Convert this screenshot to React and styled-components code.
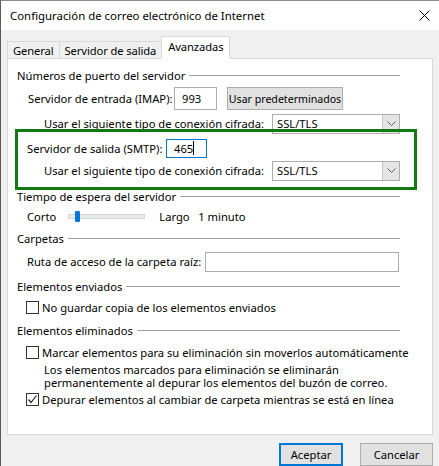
import styled, { createGlobalStyle } from 'styled-components';

const GlobalStyle = createGlobalStyle`
	html, body {
		margin: 0;
		padding: 0;
		background: #f0f0f0;
	}
	body {
		font-family: 'Noto Sans', 'Open Sans', sans-serif;
		font-size: 11.2px;
		color: #000;
	}
`;

const Window = styled.div`
	width: 438px;
	height: 465px;
	background: #f0f0f0;
	border-left: 1px solid #5a5a5a;
	border-top: 1px solid #8a8a8a;
	display: flex;
	flex-direction: column;
	overflow: hidden;
`;

const TitleBar = styled.div`
	height: 29px;
	background: #fff;
	display: flex;
	align-items: center;
	justify-content: space-between;
	padding: 0 7px 0 9px;
	flex-shrink: 0;
`;

const Title = styled.div`
	font-size: 11.4px;
	line-height: 29px;
`;

const Close = styled.svg`
	width: 11px;
	height: 11px;
	margin-right: 2px;
`;

const TabRow = styled.div`
	display: flex;
	align-items: flex-end;
	height: 28px;
	padding: 0 0 0 6px;
	position: relative;
	z-index: 1;
`;

const Tab = styled.div`
	height: ${(p) => (p.$active ? '21px' : '16px')};
	line-height: ${(p) => (p.$active ? '19px' : '17px')};
	padding: 0 ${(p) => (p.$active ? '6px' : '5px')};
	background: ${(p) => (p.$active ? '#fff' : '#f0f0f0')};
	border: 1px solid #d9d9d9;
	border-bottom: ${(p) => (p.$active ? '1px solid #fff' : '0')};
	margin-left: -1px;
	margin-bottom: ${(p) => (p.$active ? '-1px' : '0')};
	white-space: nowrap;
	letter-spacing: -0.1px;
	&:first-child {
		margin-left: 0;
	}
`;

const Panel = styled.div`
	margin: 0 6px 0 6px;
	height: 370px;
	background: #fff;
	border: 1px solid #d9d9d9;
	padding: 7px 32px 0 9px;
	display: flex;
	flex-direction: column;
	position: relative;
`;

const Section = styled.div`
	display: flex;
	align-items: center;
	height: 20px;
	margin-top: ${(p) => p.$mt || 0}px;
	white-space: nowrap;
	&::after {
		content: '';
		flex: 1;
		height: 1px;
		background: #a0a0a0;
		margin-left: 4px;
	}
`;

const Row = styled.div`
	display: flex;
	align-items: center;
	height: ${(p) => p.$h || 20}px;
	margin-top: ${(p) => p.$mt || 0}px;
	padding-left: ${(p) => p.$indent || 10}px;
	white-space: nowrap;
`;

const Label = styled.span`
	width: ${(p) => (p.$w ? `${p.$w}px` : 'auto')};
	flex-shrink: 0;
`;

const TextBox = styled.div`
	box-sizing: border-box;
	width: ${(p) => p.$w}px;
	height: ${(p) => p.$h || 22}px;
	border: 1px solid ${(p) => (p.$focus ? '#0078d7' : '#adadad')};
	background: #fff;
	display: flex;
	align-items: center;
	padding-left: 7px;
	flex-shrink: 0;
`;

const Caret = styled.span`
	display: inline-block;
	width: 1px;
	height: 14px;
	background: #000;
`;

const Button = styled.div`
	box-sizing: border-box;
	height: 23px;
	width: ${(p) => p.$w}px;
	border: ${(p) => (p.$default ? '2px solid #0078d7' : '1px solid #adadad')};
	background: #e1e1e1;
	display: flex;
	align-items: center;
	justify-content: center;
	margin-left: ${(p) => p.$ml || 0}px;
	flex-shrink: 0;
	font-size: ${(p) => p.$fs || 11.2}px;
	white-space: nowrap;
`;

const Select = styled.div`
	box-sizing: border-box;
	width: 128px;
	height: 20px;
	border: 1px solid #adadad;
	background: #fff;
	display: flex;
	align-items: center;
	justify-content: space-between;
	padding-left: 4px;
	margin-left: auto;
	flex-shrink: 0;
`;

const Arrow = styled.div`
	width: 17px;
	height: 18px;
	box-sizing: border-box;
	background: #e5e5e5;
	border-left: 1px solid #c5c5c5;
	display: flex;
	align-items: center;
	justify-content: center;
`;

const Highlight = styled.div`
	position: absolute;
	left: 7px;
	top: 70px;
	width: 396px;
	height: 55px;
	border: 3px solid #137a13;
	pointer-events: none;
`;

const Track = styled.div`
	position: relative;
	width: 75px;
	height: 3px;
	background: #e7eaea;
	border: 1px solid #d6d6d6;
	margin: 0 14px 0 12px;
`;

const Thumb = styled.div`
	position: absolute;
	left: 6px;
	top: -4px;
	width: 5px;
	height: 11px;
	border-radius: 1px;
	background: #0078d7;
`;

const Check = styled.div`
	box-sizing: border-box;
	width: 13px;
	height: 13px;
	border: 1px solid #333;
	background: #fff;
	margin-right: 3px;
	display: flex;
	align-items: center;
	justify-content: center;
	flex-shrink: 0;
`;

const Note = styled.div`
	padding-left: 27px;
	line-height: 13.5px;
	height: 27px;
	white-space: nowrap;
`;

const Footer = styled.div`
	display: flex;
	justify-content: flex-end;
	padding: 8px 6px 0 0;
`;

function Chevron() {
	return (
		<svg width="9" height="6" viewBox="0 0 9 6">
			<polyline points="0.5,0.5 4.5,4.5 8.5,0.5" fill="none" stroke="#606060" strokeWidth="1" />
		</svg>
	);
}

function CheckBox({ checked, children }) {
	return (
		<>
			<Check>
				{checked && (
					<svg width="11" height="11" viewBox="0 0 11 11">
						<polyline points="1.5,5.5 4,8.5 9.5,1.5" fill="none" stroke="#222" strokeWidth="1.2" />
					</svg>
				)}
			</Check>
			{children}
		</>
	);
}

function EncryptRow({ h, mt }) {
	return (
		<Row $h={h} $mt={mt} $indent={27}>
			<Label>Usar el siguiente tipo de conexión cifrada:</Label>
			<Select>
				SSL/TLS
				<Arrow>
					<Chevron />
				</Arrow>
			</Select>
		</Row>
	);
}

export default function App() {
	return (
		<>
			<GlobalStyle />
			<Window>
				<TitleBar>
					<Title>Configuración de correo electrónico de Internet</Title>
					<Close viewBox="0 0 11 11">
						<path d="M0.5 0.5 L10.5 10.5 M10.5 0.5 L0.5 10.5" stroke="#000" strokeWidth="1" />
					</Close>
				</TitleBar>
				<TabRow>
					<Tab>General</Tab>
					<Tab>Servidor de salida</Tab>
					<Tab $active>Avanzadas</Tab>
				</TabRow>
				<Panel>
					<Section>Números de puerto del servidor</Section>
					<Row $h={26} $indent={11}>
						<Label $w={146}>Servidor de entrada (IMAP):</Label>
						<TextBox $w={43} $h={23}>993</TextBox>
						<Button $w={116} $ml={10} $fs={10.6}>Usar predeterminados</Button>
					</Row>
					<EncryptRow h={24} />
					<Row $h={25} $indent={10}>
						<Label $w={139}>Servidor de salida (SMTP):</Label>
						<TextBox $w={41} $h={19} $focus>
							465<Caret />
						</TextBox>
					</Row>
					<EncryptRow h={20} />
					<Section $mt={6}>Tiempo de espera del servidor</Section>
					<Row $indent={10}>
						<Label>Corto</Label>
						<Track>
							<Thumb />
						</Track>
						<Label $w={39}>Largo</Label>
						<Label>1 minuto</Label>
					</Row>
					<Section $mt={2}>Carpetas</Section>
					<Row $h={26} $indent={10}>
						<Label $w={178}>Ruta de acceso de la carpeta raíz:</Label>
						<TextBox $w={194} $h={20} />
					</Row>
					<Section $mt={2}>Elementos enviados</Section>
					<Row $mt={1} $indent={9}>
						<CheckBox>No guardar copia de los elementos enviados</CheckBox>
					</Row>
					<Section $mt={3}>Elementos eliminados</Section>
					<Row $mt={2} $indent={9}>
						<CheckBox>Marcar elementos para su eliminación sin moverlos automáticamente</CheckBox>
					</Row>
					<Note>
						Los elementos marcados para eliminación se eliminarán
						<br />
						permanentemente al depurar los elementos del buzón de correo.
					</Note>
					<Row $indent={9}>
						<CheckBox checked>Depurar elementos al cambiar de carpeta mientras se está en línea</CheckBox>
					</Row>
					<Highlight />
				</Panel>
				<Footer>
					<Button $w={64} $default>Aceptar</Button>
					<Button $w={73} $ml={17}>Cancelar</Button>
				</Footer>
			</Window>
		</>
	);
}
